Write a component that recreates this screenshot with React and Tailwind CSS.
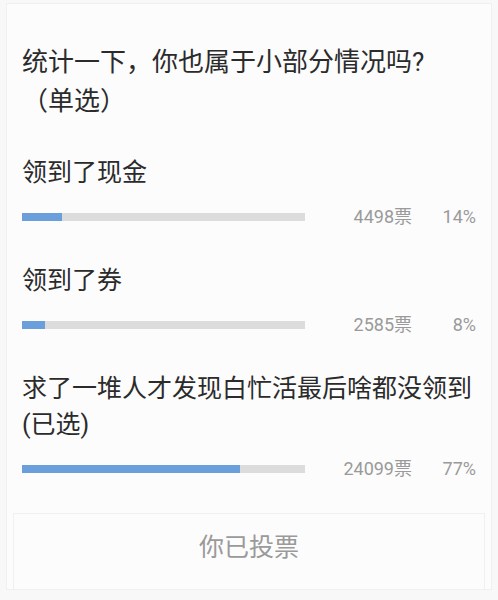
import React from "react";

// Poll result card (single choice, already voted)

const options = [
  { id: 1, label: ["领到了现金"], votes: 4498, pct: 14, gap: "mt-[34px]" },
  { id: 2, label: ["领到了券"], votes: 2585, pct: 8, gap: "mt-[34px]" },
  { id: 3, label: ["求了一堆人才发现白忙活最后啥都没领到", "(已选)"], votes: 24099, pct: 77, gap: "mt-[34px]" },
];

function ResultBar({ votes, pct }) {
  return (
    <div className="flex items-center h-[24px]">
      <div className="w-[283px] h-[8px] bg-[#dcdcdc]">
        <div className="h-full bg-[#6b9fdb]" style={{ width: `${pct}%` }} />
      </div>
      <div className="flex-1 text-right text-[18px] text-[#9a9a9a] leading-[24px]">
        {votes}票
      </div>
      <div className="w-[64px] text-right text-[18px] text-[#9a9a9a] leading-[24px]">
        {pct}%
      </div>
    </div>
  );
}

export default function App() {
  return (
    <div
      className="w-[498px] h-[600px] bg-[#f8f8f8] pt-[3px] px-[6px]"
      style={{ fontFamily: 'Roboto, "Noto Sans CJK SC", sans-serif' }}
    >
      <div className="h-[587px] bg-[#fcfcfc] border border-[#f0f0f0] flex flex-col">
        <div className="px-[15px] pt-[39px] flex-1">
          <div className="text-[26px] leading-[39px] text-[#2b2b2b]">
            统计一下，你也属于小部分情况吗?
            <br />
            （单选）
          </div>

          {options.map((o) => (
            <div key={o.id} className={o.gap}>
              <div className="text-[25px] leading-[36px] text-[#2b2b2b]">
                {o.label.map((l) => (
                  <div key={l}>{l}</div>
                ))}
              </div>
              <div className="mt-[14px]">
                <ResultBar votes={o.votes} pct={o.pct} />
              </div>
            </div>
          ))}
        </div>

        <div className="h-[76px] mx-[6px] pb-[8px] border-t border-x border-[#f0f0f0] flex items-center justify-center text-[25px] text-[#9a9a9a]">
          你已投票
        </div>
      </div>
    </div>
  );
}
